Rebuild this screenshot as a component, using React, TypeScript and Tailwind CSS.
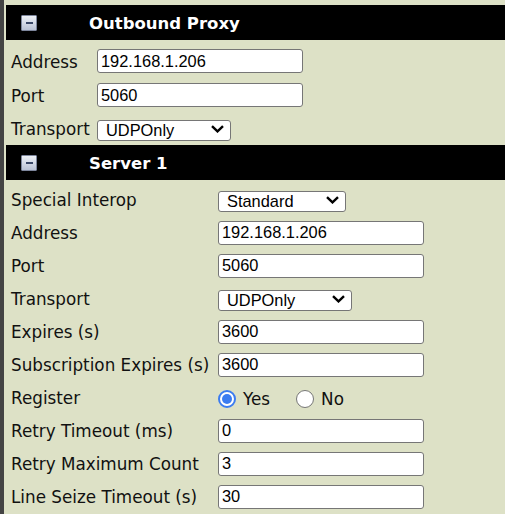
import type { ReactNode } from 'react'

const LABEL_FONT = "font-['DejaVu_Sans',Verdana,sans-serif]"
const FIELD_FONT = "font-['Liberation_Sans',Arial,sans-serif]"

function CollapseIcon() {
  return (
    <div className="flex h-[16px] w-[16px] items-center justify-center rounded-[1px] border border-[#7d869c] bg-gradient-to-b from-[#eef1f7] to-[#b9c1d4]">
      <div className="h-[2px] w-[7px] bg-[#3a4766]" />
    </div>
  )
}

function SectionHeader({ title }: { title: string }) {
  return (
    <div className="flex h-[35px] items-center bg-black">
      <div className="ml-[15px] w-[68px]">
        <CollapseIcon />
      </div>
      <span className={`pt-[3px] ${LABEL_FONT} text-[16.5px] font-bold text-white`}>{title}</span>
    </div>
  )
}

function Row({
  label,
  labelWidth,
  height = 'h-[33px]',
  children,
}: {
  label: string
  labelWidth: string
  height?: string
  children: ReactNode
}) {
  return (
    <div className={`flex items-center ${height}`}>
      <div className={`${labelWidth} shrink-0 pt-[3px] pl-[5px] ${LABEL_FONT} text-[16.8px] text-[#111]`}>
        {label}
      </div>
      {children}
    </div>
  )
}

function TextField({ value }: { value: string }) {
  return (
    <input
      type="text"
      defaultValue={value}
      className={`h-[24px] w-[206px] rounded-[3px] border border-[#767676] bg-white px-[3px] ${FIELD_FONT} text-[16.4px] text-black outline-none`}
    />
  )
}

function SelectField({ value, options, width }: { value: string; options: string[]; width: string }) {
  return (
    <div className={`relative h-[21px] ${width}`}>
      <select
        defaultValue={value}
        className={`h-full w-full appearance-none rounded-[3px] border border-[#767676] bg-white pl-[8px] ${FIELD_FONT} text-[16.4px] leading-[19px] text-black outline-none`}
      >
        {options.map((o) => (
          <option key={o}>{o}</option>
        ))}
      </select>
      <svg
        viewBox="0 0 13 8"
        className="pointer-events-none absolute top-[7px] right-[7px] h-[8px] w-[13px]"
        fill="none"
        stroke="black"
        strokeWidth="2.4"
      >
        <path d="M1 1.2 L6.5 6.4 L12 1.2" />
      </svg>
    </div>
  )
}

function Radio({ checked, label }: { checked: boolean; label: string }) {
  return (
    <label className="flex items-center">
      <span
        className={
          checked
            ? 'flex h-[18px] w-[18px] items-center justify-center rounded-full border-[2px] border-[#3b7cf0] bg-white'
            : 'flex h-[18px] w-[18px] items-center justify-center rounded-full border border-[#767676] bg-white'
        }
      >
        {checked ? <span className="h-[10px] w-[10px] rounded-full bg-[#3b7cf0]" /> : null}
      </span>
      <span className={`ml-[7px] pt-[3px] ${LABEL_FONT} text-[16.8px] text-[#111]`}>{label}</span>
    </label>
  )
}

const TRANSPORTS = ['UDPOnly', 'TCPOnly', 'TLS', 'DNSnaptr']

export default function App() {
  return (
    <div className="min-h-[514px] w-[505px] border-l-4 border-[#444] bg-[#dde1c6] pt-[5px] pl-[2px]">
      <SectionHeader title="Outbound Proxy" />
      <div className="pt-[4px]">
        <Row label="Address" labelWidth="w-[91px]" height="h-[34px]">
          <TextField value="192.168.1.206" />
        </Row>
        <Row label="Port" labelWidth="w-[91px]" height="h-[34px]">
          <TextField value="5060" />
        </Row>
        <Row label="Transport" labelWidth="w-[91px]">
          <SelectField value="UDPOnly" options={TRANSPORTS} width="w-[134px]" />
        </Row>
      </div>

      <SectionHeader title="Server 1" />
      <div className="pt-[3px]">
        <Row label="Special Interop" labelWidth="w-[212px]">
          <SelectField value="Standard" options={['Standard', 'Lync 2010']} width="w-[128px]" />
        </Row>
        <Row label="Address" labelWidth="w-[212px]">
          <TextField value="192.168.1.206" />
        </Row>
        <Row label="Port" labelWidth="w-[212px]">
          <TextField value="5060" />
        </Row>
        <Row label="Transport" labelWidth="w-[212px]">
          <SelectField value="UDPOnly" options={TRANSPORTS} width="w-[134px]" />
        </Row>
        <Row label="Expires (s)" labelWidth="w-[212px]">
          <TextField value="3600" />
        </Row>
        <Row label="Subscription Expires (s)" labelWidth="w-[212px]">
          <TextField value="3600" />
        </Row>
        <Row label="Register" labelWidth="w-[212px]">
          <div className="flex items-center gap-[26px] pt-[2px]">
            <Radio checked label="Yes" />
            <Radio checked={false} label="No" />
          </div>
        </Row>
        <Row label="Retry Timeout (ms)" labelWidth="w-[212px]">
          <TextField value="0" />
        </Row>
        <Row label="Retry Maximum Count" labelWidth="w-[212px]">
          <TextField value="3" />
        </Row>
        <Row label="Line Seize Timeout (s)" labelWidth="w-[212px]">
          <TextField value="30" />
        </Row>
      </div>
    </div>
  )
}
